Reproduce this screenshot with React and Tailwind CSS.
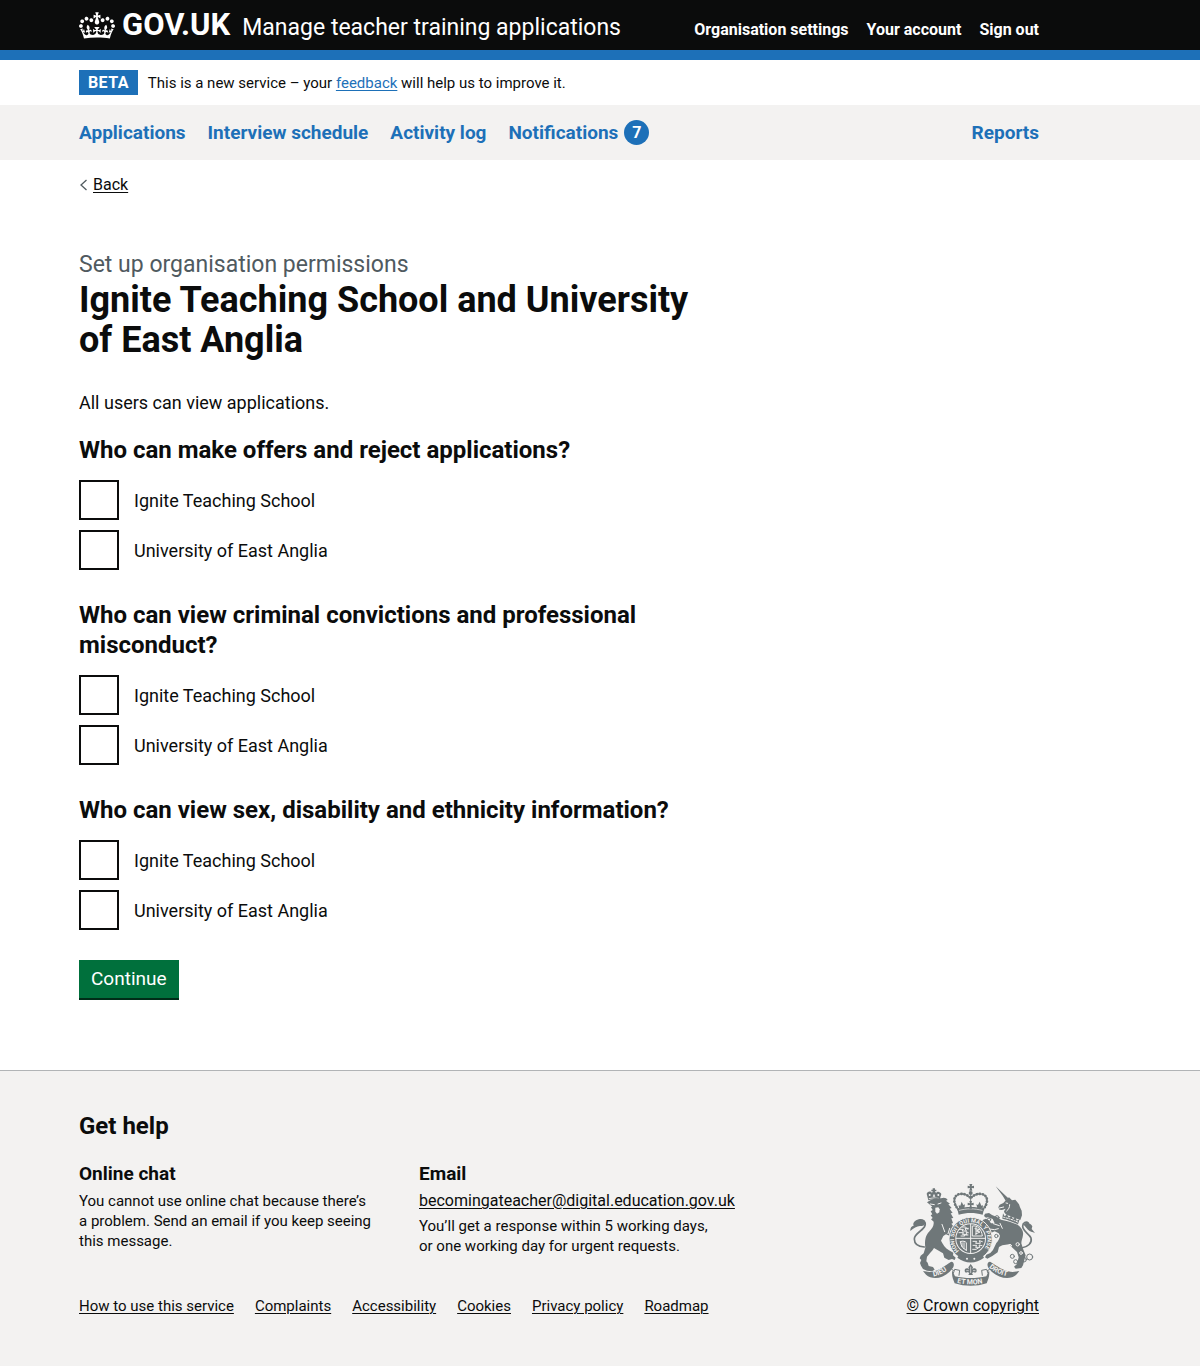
const container = "mx-[79px] max-w-[960px]";

function Crown() {
  return (
    <svg aria-hidden="true" viewBox="0 0 132 97" width="36" height="27" fill="currentColor" fillRule="evenodd">
      <path d="M25 30.2c3.5 1.5 7.7-.2 9.1-3.7 1.5-3.6-.2-7.8-3.9-9.2-3.6-1.4-7.6.3-9.1 3.9-1.4 3.5.3 7.5 3.9 9zM9 39.5c3.6 1.5 7.8-.2 9.2-3.7 1.5-3.6-.2-7.8-3.9-9.1-3.6-1.5-7.6.2-9.1 3.8-1.4 3.5.3 7.5 3.8 9zM4.4 57.2c3.5 1.5 7.7-.2 9.1-3.8 1.5-3.6-.2-7.7-3.9-9.1-3.5-1.5-7.6.3-9.1 3.8-1.4 3.5.3 7.6 3.9 9.1zm38.3-21.4c3.5 1.5 7.7-.2 9.1-3.8 1.5-3.6-.2-7.7-3.9-9.1-3.6-1.5-7.6.3-9.1 3.8-1.3 3.6.4 7.7 3.9 9.1zm64.4-5.6c-3.6 1.5-7.8-.2-9.1-3.7-1.5-3.6.2-7.8 3.8-9.2 3.6-1.4 7.7.3 9.2 3.9 1.3 3.5-.4 7.5-3.9 9zm15.9 9.3c-3.6 1.5-7.7-.2-9.1-3.7-1.5-3.6.2-7.8 3.7-9.1 3.6-1.5 7.7.2 9.2 3.8 1.5 3.5-.3 7.5-3.8 9zm4.7 17.7c-3.6 1.5-7.8-.2-9.2-3.8-1.5-3.6.2-7.7 3.9-9.1 3.6-1.5 7.7.3 9.2 3.8 1.3 3.5-.4 7.6-3.9 9.1zM89.3 35.8c-3.6 1.5-7.8-.2-9.2-3.8-1.4-3.6.2-7.7 3.9-9.1 3.6-1.5 7.7.3 9.2 3.8 1.4 3.6-.3 7.7-3.9 9.1zM69.7 17.7l8.9 4.7V9.3l-8.9 2.8c-.2-.3-.5-.6-.9-.9L72.4 0H59.6l3.5 11.2c-.3.3-.6.5-.9.9l-8.8-2.8v13.1l8.8-4.7c.3.3.6.7.9.9l-5 15.4v.1c-.2.8-.4 1.6-.4 2.4 0 4.1 3.1 7.5 7 8.1h.2c.3 0 .7.1 1 .1.4 0 .7 0 1-.1h.2c4-.6 7.1-4.1 7.1-8.1 0-.8-.1-1.7-.4-2.4V34l-5.1-15.4c.4-.2.7-.6 1-.9zM66 92.8c16.9 0 32.8 1.1 47.1 3.2 4-16.9 8.9-26.7 14-33.5l-9.6-3.4c1 4.9 1.1 7.2 0 10.2-1.5-1.4-3-4.3-4.2-8.7L108.6 76c2.8-2 5-3.2 7.5-3.3-4.4 9.4-10 11.9-13.6 11.2-4.3-.8-6.3-4.6-5.6-7.9 1-4.7 5.7-5.9 8-.5 4.3-8.7-3-11.4-7.6-8.8 7.1-7.2 7.9-13.5 2.1-21.1-8 6.1-8.1 12.3-4.5 20.8-4.7-5.4-12.1-2.5-9.5 6.2 3.4-5.2 7.9-2 7.2 3.1-.6 4.3-6.4 7.8-13.5 7.2-10.3-.9-10.9-8-11.2-13.8 2.5-.5 7.1 1.8 11 7.3L80.2 60c-4.1 4.4-8 5.3-12.3 5.4 1.4-4.4 8-11.6 8-11.6H55.5s6.4 7.2 7.9 11.6c-4.2-.1-8-1-12.3-5.4l1.4 16.4c3.9-5.5 8.5-7.7 10.9-7.3-.3 5.8-.9 12.8-11.1 13.8-7.2.6-12.9-2.9-13.5-7.2-.7-5 3.8-8.3 7.1-3.1 2.7-8.7-4.6-11.6-9.4-6.2 3.7-8.5 3.6-14.7-4.6-20.8-5.8 7.6-5 13.9 2.2 21.1-4.7-2.6-11.9.1-7.7 8.8 2.3-5.5 7.1-4.2 8.1.5.7 3.3-1.3 7.1-5.7 7.9-3.5.7-9-1.8-13.5-11.2 2.5.1 4.7 1.3 7.5 3.3l-4.7-15.4c-1.2 4.4-2.7 7.2-4.3 8.7-1.1-3-.9-5.3 0-10.2l-9.5 3.4c5 6.9 9.9 16.7 14 33.5 14.8-2.1 30.8-3.2 47.7-3.2z" />
    </svg>
  );
}

function RoyalArms() {
  const ink = "#6f7779";
  const paper = "#f3f2f1";
  return (
    <svg aria-hidden="true" viewBox="30 24 381 309" width="127" height="103" fill={ink} strokeLinecap="round" strokeLinejoin="round" fontFamily="Roboto, sans-serif" fontWeight="700">
      {/* lion's crown */}
      <path d="M88 76l-5-20c4-8 12-8 16-2 2-6 10-6 12 0 5-7 12-4 16 3l-5 17c-11-4-23-2-34 2z" />
      <path d="M101 40h7v4h4v5h-4v6h-7v-6h-4v-5h4z" />
      <g fill={paper}>
        <circle cx="92" cy="60" r="3" /><circle cx="118" cy="60" r="3" /><path d="M105 56l4 9h-8zM89 70c9-3 20-4 32-1l-1 2c-10-2-21-2-30 1z" />
      </g>
      {/* lion */}
      <path d="M84 82c10-8 24-13 42-12 9-4 16-2 20 5l-5 2 12 9-5 2 10 11-6 2 9 13-6 1 8 14-6 1 5 14-5 2c8 8 12 18 11 32l-6 14-9-9-12-5-8 5-7 14c6 12 13 22 24 29l13 7-1 8 8 7-3 7-8-3-10 3-13-7-4-13-27-16c-6 10-15 18-21 26l-2 14 4 4 3 10 13 3 5 8-8 5-15-2-12-5-6-10-3-8 4-9-5-5 3-8 9-7 5-17c-1-10-2-18 1-30 5-14 11-18 17-26 5-7 8-13 7-22l-8-7 5-4-6-8 5-3-5-9 6-4-5-8 4-2z" />
      <path d="M76 216c-17-1-30-9-30-24 0-16 22-23 30-36 7-13-1-22-11-16" fill="none" stroke={ink} strokeWidth="5" />
      <path d="M34 168c-1-10 4-15 10-16-4-8 4-16 15-19 10-3 20 1 20 10-1 8-8 10-16 10-10 0-19 7-29 15z" />
      <path d="M130 145c15 6 28 18 36 32l-1 8 5 7-3 6-9-2-6-16-20-15z" />
      <g fill="none" stroke={paper} strokeWidth="3">
        <path d="M94 87l12 2M117 87l9-3M129 148l8 22M152 160l-5 16" />
      </g>
      <path d="M109 98l9-1 4 6-1 9-7 4-5-6z" fill={paper} />

      {/* unicorn */}
      <path d="M290 34l38 36-8 7-9-15z" />
      <path d="M326 70l4-3 9 9 10-2 11 14 3 9 5 10 1 14-5 14c-12-3-25-10-40-15-5-3-8-6-9-11l5-8-11 4-8-1-3-7 4-8 11-5 6-7z" />
      <path d="M301 99l13-3M321 84l5 1M332 89c0 8-3 14-9 19" fill="none" stroke={paper} strokeWidth="3" />
      <path d="M312 115l5 9 7-6 5 10 8-6 5 10 8-5 3 10 9-4-5 15c-14-7-30-13-47-17z" />
      <path d="M314 127c15 3 29 8 42 14" fill="none" stroke={paper} strokeWidth="3" strokeDasharray="4 4" />
      <path d="M306 134c18 3 34 8 50 15 12 9 18 19 16 31-1 10-5 16-5 25l5 16 8 20-5 18-3 12-5 8-17 2-5-6 9-8 5-20-5-16-16-15-8-8-20 3-10 5-4 16-16 11-15 8-7-4 4-8 12-5 8-9 10-21c6-6 9-13 11-22l-4-7-12-6-10 4-15-1-4-5 5-7-11-4-5-9 5-3-1-9 10-4 8 5 7 9 11 0-6-13-14-5-6 1-6-5 3-7 12-2 9 6 16 7z" />
      <g fill="none" stroke={paper} strokeWidth="3">
        <path d="M303 145l7 15M283 146l18 6M272 162l14 2 12-3" />
        <circle cx="333" cy="212" r="4" /><circle cx="356" cy="208" r="5" /><circle cx="366" cy="234" r="4" />
      </g>
      <path d="M367 219c20-3 33-15 29-30-4-12-25-20-25-35 0-12 11-16 17-10" fill="none" stroke={ink} strokeWidth="5" />
      <path d="M374 149c7-10 20-5 26 5l-2 8 10 12c-8-4-15-4-21-10z" />
      <g fill="none" stroke={ink} strokeWidth="3">
        <circle cx="340" cy="244" r="6" /><circle cx="350" cy="260" r="6" /><circle cx="375" cy="254" r="7" /><circle cx="392" cy="246" r="9" />
        <circle cx="270" cy="134" r="5" /><circle cx="294" cy="128" r="6" /><circle cx="292" cy="183" r="5" />
      </g>

      {/* crown over the shield */}
      <path d="M211 27h9l-2 7 7-2v8l-7-1 2 8h-9l2-8-7 1v-8l7 2z" />
      <circle cx="215" cy="54" r="6" />
      <path d="M179 104c-18-18-18-44 4-47 14-2 26 5 32 13 6-8 18-15 32-13 22 3 22 29 4 47" fill="none" stroke={ink} strokeWidth="8" strokeDasharray="1 8" />
      <path d="M179 104c-18-18-18-44 4-47 14-2 26 5 32 13 6-8 18-15 32-13 22 3 22 29 4 47M215 60v35" fill="none" stroke={ink} strokeWidth="3" />
      <path d="M175 101c25-7 55-7 80 0l-4 18c-24-7-48-7-72 0z" />
      <path d="M181 106c23-6 45-6 68 0" fill="none" stroke={paper} strokeWidth="2" />
      <path d="M211 78h8l-2 7 7-2v8l-7-1 2 11h-8l2-11-7 1v-8l7 2zM188 80l5 10 5-2-2 12h-16l-1-9 5 1zM242 80l5 12 5-1-1 9h-16l-3-12 5 2z" />

      {/* garter and quartered shield */}
      <circle cx="215" cy="192" r="65" stroke={paper} strokeWidth="3" />
      <circle cx="215" cy="191" r="46" fill={paper} />
      <circle cx="215" cy="191" r="43" />
      <path d="M215 148v86M172 190h86" stroke={paper} strokeWidth="3" />
      <g fill="none" stroke={paper} strokeWidth="3">
        <path d="M181 163h12l-4 5h13l-4-8 9 2M180 173h14l-4 5h14l-3-8 7 3M186 183h11l-2-3h12M190 156h10l3 4h5" />
        <path d="M221 153c14-3 27 9 29 30h-29zM228 161l14 3-10 4 11 3-13 6M231 157v21" />
        <path d="M184 200c8-4 16 0 18 3v23M184 200c2 14 8 21 18 26M189 203v12M195 203v18" />
        <path d="M222 199h11l-3 6h14l-3-8 9 3M222 211h11l-3 6h13l-3-7 9 2M221 223h10l7-4" />
      </g>
      <path id="garter" d="M180 228a50 50 0 1 1 70 0" fill="none" />
      <text fill={paper} fontSize="17"><textPath href="#garter">HONI SOIT QUI MAL Y PENSE</textPath></text>
      <path d="M180 240c22 14 48 14 70 0l5 8c-24 19-56 19-80 0z" />
      <circle cx="204" cy="251" r="3" fill={paper} /><circle cx="226" cy="251" r="3" fill={paper} />

      {/* motto ribbon */}
      <path d="M72 288l20 3c28-2 44-19 65-31 9 1 9 11 5 18l-10 12c-18 16-38 23-58 17-10-3-17-12-22-19z" />
      <path d="M361 288l-20 3c-28-2-47-19-68-31-9 1-9 11-5 18l10 12c20 16 41 23 61 17 10-3 17-12 22-19z" />
      <path d="M157 262c-10 10-4 18 6 24l8 4M273 262c10 10 4 18-6 24l-8 4" fill="none" stroke={ink} strokeWidth="3" />
      <path d="M160 286c-3 15 2 27 7 39 31 10 65 10 96 0 5-12 10-24 7-39l-8 18c-29 7-64 7-94 0z" />
      <path d="M163 295l4-12 15 3-2 15M267 295l-4-12-15 3 2 15" fill={paper} stroke={ink} strokeWidth="3" />
      <path id="dieu" d="M103 304c22-3 36-12 54-28" fill="none" />
      <path id="droit" d="M270 277c19 16 41 26 66 28" fill="none" />
      <path id="etmon" d="M174 323c27 7 56 7 85 0" fill="none" />
      <g fill={paper} fontSize="21">
        <text><textPath href="#dieu">DIEU</textPath></text>
        <text><textPath href="#droit">DROIT</textPath></text>
        <text><textPath href="#etmon">ET MON</textPath></text>
      </g>
      <path d="M215 267l7 10-3 9c2-8 14-8 14 1 0 6-6 7-9 4l-5 3 3 6h-14l3-6-5-3c-3 3-9 2-9-4 0-9 12-9 14-1l-3-9z" />
      <path d="M215 276v17M203 287h5M223 287h5" stroke={paper} strokeWidth="2" />
    </svg>
  );
}

function Link({ children, className = "" }) {
  return (
    <a href="#" className={`underline underline-offset-2 decoration-1 ${className}`}>
      {children}
    </a>
  );
}

const organisations = ["Ignite Teaching School", "University of East Anglia"];

function Question({ id, title }) {
  return (
    <fieldset className="mb-[30px]">
      <legend className="mb-[15px] text-2xl leading-[30px] font-bold">{title}</legend>
      <div className="flex flex-col gap-2.5">
        {organisations.map((name, i) => (
          <div key={name} className="flex items-center gap-[15px]">
            <input
              type="checkbox"
              id={`${id}-${i}`}
              className="size-10 shrink-0 appearance-none border-2 border-[#0b0c0c] bg-white checked:bg-[#0b0c0c]"
            />
            <label htmlFor={`${id}-${i}`} className="text-lg leading-[25px]">{name}</label>
          </div>
        ))}
      </div>
    </fieldset>
  );
}

export default function App() {
  return (
    <div className="flex min-h-screen flex-col bg-[#f3f2f1] font-['Roboto',sans-serif] text-[#0b0c0c]">
      <header className="border-b-10 border-[#1d70b8] bg-[#0b0c0c] text-white">
        <div className={`${container} flex h-[50px] items-center justify-between`}>
          <div className="flex items-center gap-3">
            <a href="#" className="flex h-12 items-center gap-[7px]">
              <Crown />
              <span className="text-[31px] leading-[48px] font-bold">GOV.UK</span>
            </a>
            <a href="#" className="pt-1.5 text-[23px] leading-[30px]">Manage teacher training applications</a>
          </div>
          <nav aria-label="Account" className="flex gap-[18px] pt-2.5 text-base leading-5 font-bold">
            <a href="#">Organisation settings</a>
            <a href="#">Your account</a>
            <a href="#">Sign out</a>
          </nav>
        </div>
      </header>

      <div className="bg-white">
        <div className={`${container} flex items-center gap-2.5 py-2.5`}>
          <strong className="bg-[#1d70b8] px-[9px] text-base leading-[25px] font-bold tracking-wide text-white">BETA</strong>
          <p className="text-[15px] leading-5">
            This is a new service – your <Link className="text-[#1d70b8]">feedback</Link> will help us to improve it.
          </p>
        </div>
      </div>

      <nav aria-label="Primary" className="bg-[#f3f2f1] text-[19px] leading-[25px] font-bold text-[#1d70b8]">
        <div className={`${container} flex items-center gap-[22px] py-[15px]`}>
          <a href="#">Applications</a>
          <a href="#">Interview schedule</a>
          <a href="#">Activity log</a>
          <a href="#" className="flex items-center gap-1.5">
            Notifications
            <span className="size-[25px] rounded-full bg-[#1d70b8] text-center text-base leading-[25px] text-white">7</span>
          </a>
          <a href="#" className="ml-auto">Reports</a>
        </div>
      </nav>

      <div className="bg-white pt-[15px] pb-[70px]">
        <div className={container}>
          <a href="#" className="flex w-fit items-center gap-[5px] text-base leading-5">
            <svg aria-hidden="true" width="9" height="12" viewBox="0 0 9 12" fill="none" stroke="#505a5f" strokeWidth="1.3">
              <path d="M7.500 1 2 6l5.500 5" />
            </svg>
            <span className="underline decoration-1 underline-offset-2">Back</span>
          </a>
          <main className="max-w-[630px] pt-[55px]">
            <span className="block text-[23px] leading-[30px] text-[#505a5f]">Set up organisation permissions</span>
            <h1 className="mb-[30px] text-4xl leading-10 font-bold">Ignite Teaching School and University of East Anglia</h1>
            <p className="mb-5 text-lg leading-[25px]">All users can view applications.</p>
            <form>
              <Question id="offers" title="Who can make offers and reject applications?" />
              <Question id="safeguarding" title="Who can view criminal convictions and professional misconduct?" />
              <Question id="diversity" title="Who can view sex, disability and ethnicity information?" />
              <button type="button" className="block border-b-2 border-[#002d18] bg-[#00703c] px-3 text-[19px] leading-[38px] text-white">
                Continue
              </button>
            </form>
          </main>
        </div>
      </div>

      <footer className="border-t border-[#b1b4b6] pt-10 pb-[50px]">
        <div className={container}>
          <h2 className="mb-5 text-2xl leading-[30px] font-bold">Get help</h2>
          <div className="flex items-end justify-between">
            <div>
              <div className="mb-10 flex gap-10 text-[15px] leading-5">
                <section className="w-[300px]">
                  <h3 className="mb-[5px] text-[19px] leading-[25px] font-bold">Online chat</h3>
                  <p className="pr-1">You cannot use online chat because there’s a problem. Send an email if you keep seeing this message.</p>
                </section>
                <section className="w-80">
                  <h3 className="mb-[5px] text-[19px] leading-[25px] font-bold">Email</h3>
                  <p className="mb-[5px] text-base leading-5"><Link>becomingateacher@digital.education.gov.uk</Link></p>
                  <p>You’ll get a response within 5 working days,<br />or one working day for urgent requests.</p>
                </section>
              </div>
              <ul className="flex gap-[21px] text-[15px] leading-5">
                <li><Link>How to use this service</Link></li>
                <li><Link>Complaints</Link></li>
                <li><Link>Accessibility</Link></li>
                <li><Link>Cookies</Link></li>
                <li><Link>Privacy policy</Link></li>
                <li><Link>Roadmap</Link></li>
              </ul>
            </div>
            <a href="#" className="flex flex-col items-center gap-2.5 text-base leading-5 underline decoration-1 underline-offset-2">
              <RoyalArms />
              © Crown copyright
            </a>
          </div>
        </div>
      </footer>
    </div>
  );
}
